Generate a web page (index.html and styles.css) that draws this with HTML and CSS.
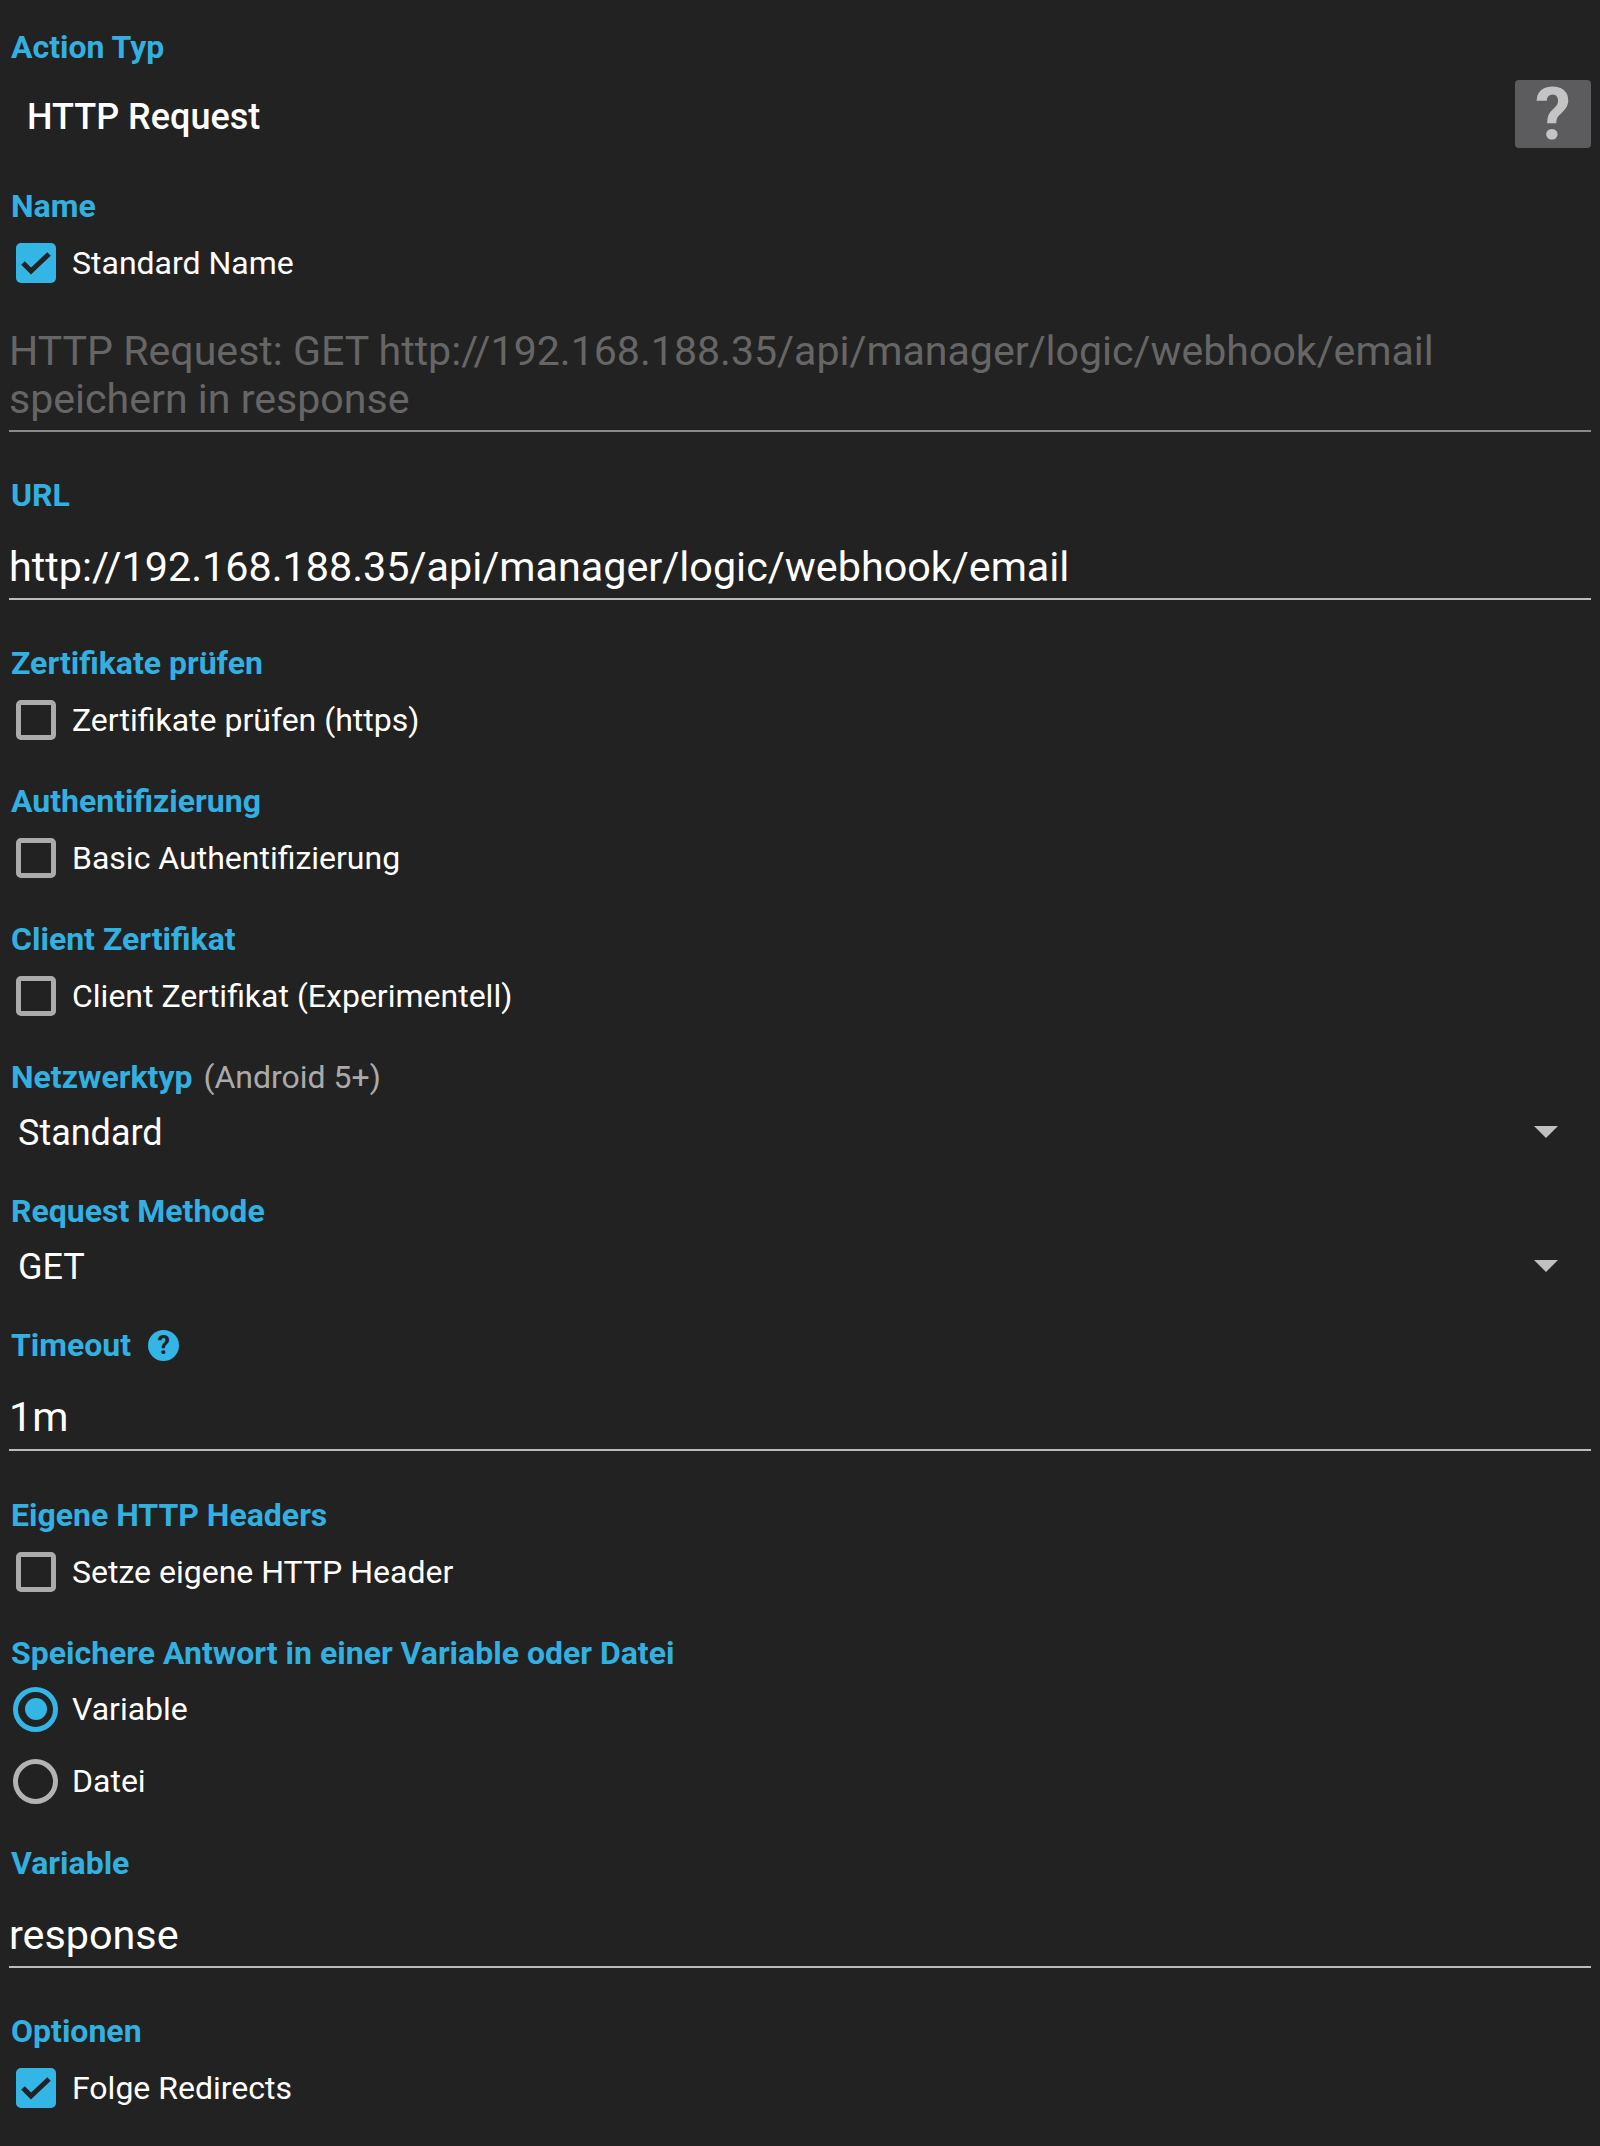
FILE: index.html
```html
<!DOCTYPE html>
<html lang="de">
<head>
  <meta charset="UTF-8" />
  <meta name="viewport" content="width=device-width, initial-scale=1.0"/>
  <title>HTTP Request</title>
  <link rel="stylesheet" href="styles.css">
</head>
<body>
<div class="section">
  <div class="label">Action Typ</div>
  <div class="type-row">
    <span class="type-name">HTTP Request</span>
    <button type="button" class="help-btn">?</button>
  </div>
</div>

<div class="section">
  <div class="label">Name</div>
  <div class="check-row"><span class="box checked"><svg viewBox="0 0 40 40"><path d="M7 20 L15 28 L33 11" /></svg></span>Standard Name</div>
  <div class="field hint">HTTP Request: GET http://192.168.188.35/api/manager/logic/webhook/email speichern in response</div>
</div>

<div class="section">
  <div class="label">URL</div>
  <div class="field">http://192.168.188.35/api/manager/logic/webhook/email</div>
</div>

<div class="section">
  <div class="label">Zertifikate prüfen</div>
  <div class="check-row"><span class="box"></span>Zertifikate prüfen (https)</div>
</div>

<div class="section">
  <div class="label">Authentifizierung</div>
  <div class="check-row"><span class="box"></span>Basic Authentifizierung</div>
</div>

<div class="section">
  <div class="label">Client Zertifikat</div>
  <div class="check-row"><span class="box"></span>Client Zertifikat (Experimentell)</div>
</div>

<div class="section">
  <div class="label">Netzwerktyp <span class="label-note">(Android 5+)</span></div>
  <div class="select-row"><span class="select-value">Standard</span><span class="arrow"></span></div>
</div>

<div class="section">
  <div class="label">Request Methode</div>
  <div class="select-row"><span class="select-value">GET</span><span class="arrow"></span></div>
</div>

<div class="section">
  <div class="label">Timeout <span class="info">?</span></div>
  <div class="field timeout">1m</div>
</div>

<div class="section">
  <div class="label">Eigene HTTP Headers</div>
  <div class="check-row"><span class="box"></span>Setze eigene HTTP Header</div>
</div>

<div class="section">
  <div class="label">Speichere Antwort in einer Variable oder Datei</div>
  <div class="radio-group">
    <div class="radio-row"><span class="radio on"></span>Variable</div>
    <div class="radio-row"><span class="radio"></span>Datei</div>
  </div>
</div>

<div class="section">
  <div class="label">Variable</div>
  <div class="field">response</div>
</div>

<div class="section">
  <div class="label">Optionen</div>
  <div class="check-row"><span class="box checked"><svg viewBox="0 0 40 40"><path d="M7 20 L15 28 L33 11" /></svg></span>Folge Redirects</div>
</div>
</body>
</html>
```

FILE: styles.css
```css
html { background: #222222; }
body { font-family: Roboto, "Liberation Sans", sans-serif; color: white; margin: 0; padding: 25px 9px 0; font-size: 32px; }
.section { margin-bottom: 25px; }
.label { height: 44px; line-height: 44px; padding-left: 2px; color: #33b0e0; font-weight: 700; font-size: 32px; display: flex; align-items: center; }
.label-note { color: #aaaaaa; font-weight: 400; font-size: 32px; margin-left: 11px; }
.type-row { display: flex; justify-content: space-between; align-items: center; height: 68px; margin: 11px 0 36px; padding-left: 18px; }
.type-name { font-size: 36px; font-weight: 500; margin-top: 5px; }
.help-btn { width: 76px; height: 68px; padding: 0; border: none; border-radius: 4px; background: #5c5c5e; color: #c4c4c4; font-family: Roboto, sans-serif; font-size: 72px; font-weight: 700; line-height: 70px; }
.check-row { display: flex; align-items: center; height: 69px; padding-left: 7px; }
.box { width: 30px; height: 30px; border: 5px solid #ababab; border-radius: 5px; margin-right: 16px; display: flex; }
.box.checked { background: #33b5e5; border-color: #33b5e5; }
.box svg { width: 40px; height: 40px; margin: -5px; fill: none; stroke: #222222; stroke-width: 5; }
.field { margin-top: 26px; padding-bottom: 7px; border-bottom: 2px solid #bbbbbb; font-size: 41.3px; line-height: 48px; margin-bottom: 41px; }
.hint { color: #666666; border-bottom-color: #8a8a8a; font-size: 41.1px; margin-top: 30px; }
.timeout { padding-bottom: 8px; margin-bottom: 42px; }
.section:has(.field) { margin-bottom: 0; }
.select-row { display: flex; justify-content: space-between; align-items: center; height: 66px; padding: 0 33px 0 9px; font-size: 36px; margin-bottom: -1px; }
.select-value { margin-top: 2px; }
.arrow { width: 0; height: 0; border-left: 12px solid transparent; border-right: 12px solid transparent; border-top: 12px solid #c0c0c0; }
.info { width: 31px; height: 31px; border-radius: 50%; background: #33b5e5; color: #222222; font-size: 25px; line-height: 31px; text-align: center; margin-left: 17px; }
.radio-group { margin: -2px 0 -1px; }
.radio-row { display: flex; align-items: center; height: 72px; padding-left: 4px; }
.radio { width: 35px; height: 35px; border: 5px solid #b3b3b3; border-radius: 50%; margin-right: 14px; display: flex; align-items: center; justify-content: center; }
.radio.on { border-color: #33b5e5; }
.radio.on::after { content: ""; width: 22px; height: 22px; border-radius: 50%; background: #33b5e5; }
```
